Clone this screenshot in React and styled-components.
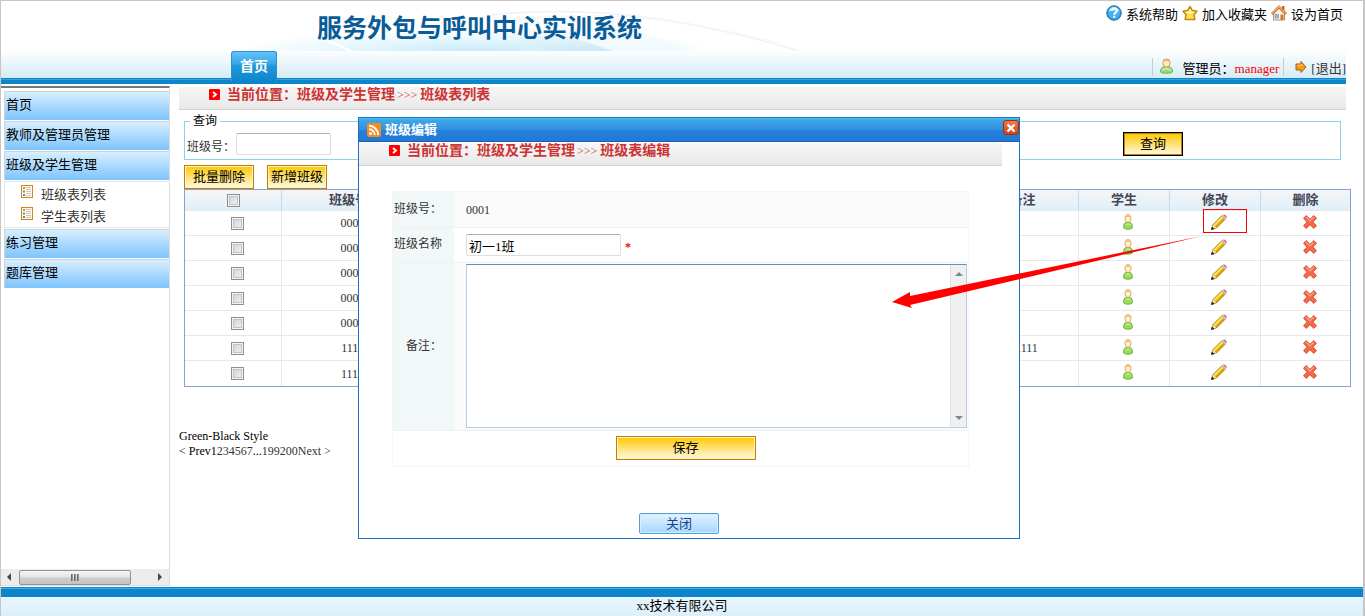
import React from 'react'
import styled, { createGlobalStyle, css } from "styled-components";

const GlobalStyle = createGlobalStyle`
  * {
    box-sizing: border-box;
  }
  body {
    margin: 0;
    background: #fff;
    color: #000;
    font-family: "Liberation Serif", "Noto Sans CJK SC", serif;
    font-size: 13px;
    line-height: 16px;
  }
  a {
    color: inherit;
    text-decoration: none;
  }
  button, input, textarea {
    font-family: inherit;
    font-size: 13px;
  }
`;

const Page = styled.div`
  position: relative;
  display: flex;
  flex-direction: column;
  min-height: 100vh;
  border: solid #c6c6c8;
  border-width: 1px 2px 0 1px;
`;

/* header */

const Header = styled.header`
  padding-right: 17px;
`;

const HeaderTop = styled.div`
  display: flex;
  justify-content: space-between;
  height: 50px;
`;

const Banner = styled.div`
  display: grid;
  align-items: center;
  margin-left: 230px;

  > * {
    grid-area: 1 / 1;
  }
`;

const Title = styled.h1`
  margin: 0;
  padding-left: 86px;
  color: #0a5c98;
  font-family: "Noto Sans CJK SC", sans-serif;
  font-size: 25px;
  font-weight: bold;
  line-height: 50px;
  white-space: nowrap;
`;

const TopLinks = styled.nav`
  display: flex;
  align-items: flex-start;
  gap: 4px;
  padding: 3px 3px 0 0;
`;

const TopLink = styled.a`
  display: flex;
  align-items: flex-start;
  gap: 4px;
  white-space: nowrap;

  span {
    padding-top: 3px;
  }
`;

const NavBar = styled.div`
  display: flex;
  justify-content: space-between;
  height: 33px;
  padding-left: 230px;
  background: linear-gradient(#fdfeff, #d4ecf6 27px, #0c85cc 27px 28px, #3a9fde 28px 29px, #0c85cc 29px);
`;

const Tab = styled.a`
  height: 31px;
  padding: 0 8px;
  border: 1px solid #2e8fd2;
  border-bottom: 0;
  border-radius: 3px 3px 0 0;
  background: linear-gradient(#62c3f8, #3aa6e6 40%, #2398dc 45%, #0c85cc);
  color: #fff;
  font-size: 14px;
  font-weight: bold;
  line-height: 29px;
`;

const UserInfo = styled.div`
  display: flex;
  align-items: flex-start;
  padding-top: 7px;
`;

const UserCell = styled.div`
  display: flex;
  height: 18px;
  border-left: 1px solid #c8ccd0;
  padding-left: ${(props) => props.$pad}px;
  margin-right: ${(props) => props.$space || 0}px;

  span, a {
    padding: 3px 0 0 ${(props) => props.$textPad}px;
  }
  a {
    color: #333;
  }
`;

const Manager = styled.b`
  color: #f00;
  font-weight: normal;
`;

/* sidebar */

const Body = styled.div`
  display: flex;
  flex: 1;
  padding-top: 2px;
`;

const Sidebar = styled.aside`
  display: flex;
  flex-direction: column;
  justify-content: space-between;
  width: 169px;
  margin-bottom: 1px;
  border-top: 2px solid #777;
  border-right: 1px solid #ddd;
`;

const Menu = styled.nav`
  padding: 3px 0 0 3px;
`;

const MenuItem = styled.a`
  display: block;
  height: 29px;
  margin-bottom: 1px;
  padding-left: 1px;
  border: solid #cbd5de;
  border-width: 1px 0 0 1px;
  background: linear-gradient(#d8effe, #7cc4fe);
  line-height: 26px;
`;

const SubMenu = styled.div`
  height: 47px;
  margin-bottom: 1px;
  padding-top: 1px;
  border: 1px solid #e6e6e6;
  border-right: 0;
`;

const SubItem = styled.a`
  display: flex;
  gap: 8px;
  padding: 2px 0 0 16px;
  height: 22px;
  color: #333;

  span {
    padding-top: 2px;
  }
`;

const ScrollRow = styled.div`
  display: flex;
  align-items: center;
  height: 17px;
  padding: 0 5px;
  background: #ececec;
  border-bottom: 1px solid #ddd;
`;

const ScrollThumb = styled.div`
  width: 113px;
  height: 15px;
  margin: 0 27px 0 7px;
  border: 1px solid #949494;
  border-radius: 2px;
  background: linear-gradient(#f5f5f5, #e4e4e6 48%, #cfcfd2 52%, #c4c4c8);
  display: flex;
  justify-content: center;
  align-items: center;
  gap: 1px;

  i {
    width: 2px;
    height: 7px;
    background: linear-gradient(90deg, #555, #aaa);
  }
`;

/* main */

const Main = styled.main`
  flex: 1;
  padding: 1px 12px 0 9px;
`;

const Crumb = styled.div`
  display: flex;
  height: 23px;
  margin-right: ${(props) => props.$right}px;
  padding: 1px 0 0 30px;
  gap: 7px;
  border-bottom: 1px solid #d2d2d2;
  background: linear-gradient(#f6f6f6, #e9e9e9);
  color: #c33;
  font-size: 14px;
  font-weight: bold;
  line-height: 14px;
  white-space: nowrap;

  em {
    margin: 0 3px 0 2px;
    font-size: 12px;
    font-style: normal;
    font-weight: normal;
  }
`;

const SearchBox = styled.fieldset`
  display: flex;
  justify-content: space-between;
  height: 47px;
  margin: 3px 10px 5px 5px;
  padding: 3px 157px 0 2px;
  border: 1px solid #87d3ea;
  min-width: 0;
  font-size: 12px;

  legend {
    margin-left: 3px;
    padding: 0 3px;
  }
`;

const SearchField = styled.label`
  display: flex;
  align-items: flex-start;
  padding-top: 1px;
  color: #333;

  span {
    width: 49px;
    padding-top: 6px;
  }
`;

const TextInput = styled.input`
  width: ${(props) => props.$width}px;
  height: 22px;
  padding: 1px 2px;
  border: 1px solid #dcdce4;
  border-top-color: #abadb3;
  border-radius: 2px;
  background: #fff;
  color: #000;
`;

const YellowButton = styled.button`
  width: ${(props) => props.$width}px;
  height: 24px;
  padding: 0;
  border: 1px solid #c07f00;
  box-shadow: inset 0 0 0 1px #fff3c4;
  background: linear-gradient(#fdc700, #fffbe6);
  color: #000;
  line-height: 20px;

  ${(props) => props.$primary && css`
    border-color: #000;
    box-shadow: inset 0 0 0 1px #c07f00;
  `}
`;

const Actions = styled.div`
  display: flex;
  gap: 13px;
  padding-left: 5px;
`;

const ListTable = styled.table`
  width: calc(100% - 5px);
  margin-left: 5px;
  border: 1px solid #84a2d3;
  border-collapse: separate;
  border-spacing: 0;
  table-layout: fixed;
  font-size: 12px;
  color: #333;

  th, td {
    border-bottom: 1px solid #e8e8ea;
    border-right: 1px solid #e8e8ea;
    text-align: center;
  }
  th {
    height: 21px;
    padding: 0;
    border-right-color: #c8d8e8;
    background: linear-gradient(#f4f6f8, #e0eff8);
    color: #445;
    font-size: 13px;
    line-height: 16px;
  }
  td {
    height: 25px;
    padding: 0 0 0 8px;
    line-height: 14px;
  }
  tr > :last-child {
    border-right: 0;
  }
  tbody tr:last-child td {
    border-bottom: 0;
  }
`;

const Check = styled.input`
  appearance: none;
  display: block;
  width: 13px;
  height: 13px;
  margin: 0 auto;
  border: 1px solid #8e8f8f;
  box-shadow: inset 0 0 0 1px #f4f4f4, inset 0 0 0 2px #c0c4c8;
  background: linear-gradient(135deg, #cbcfd5, #f6f6f6);
`;

const IconLink = styled.a`
  display: block;
  height: 19px;

  svg {
    display: block;
    margin: 0 auto;
  }
`;

const Pager = styled.div`
  margin-top: 42px;
  font-size: 12px;
  line-height: 15px;

  a {
    color: #333;
  }
`;

const Footer = styled.footer`
  height: 29px;
  padding-top: 10px;
  background: linear-gradient(#0c85cc 1px, #45ace8 1px 2px, #0c85cc 2px 10px, #e8f6fe 10px, #dbf0f8);
  text-align: center;
  line-height: 17px;
`;

/* dialog */

const Dialog = styled.section`
  position: absolute;
  left: 357px;
  top: 116px;
  width: 662px;
  border: 1px solid #1f6fc4;
  background: #fff;
`;

const DialogTitle = styled.div`
  display: flex;
  align-items: center;
  gap: 4px;
  height: 24px;
  margin-bottom: 1px;
  padding: 0 0 0 8px;
  border-top: 1px solid #3dc8f5;
  border-bottom: 1px solid #1a5fb4;
  background: linear-gradient(#45a8e6, #2f91e2 48%, #2580dc 52%, #2278d6);

  h2 {
    flex: 1;
    margin: 0;
    color: #fff;
    font-size: 13px;
    line-height: 20px;
  }
`;

const CloseIcon = styled.button`
  width: 16px;
  height: 15px;
  padding: 0;
  margin-bottom: 5px;
  border: 1px solid #a02e10;
  border-radius: 3px;
  background: linear-gradient(#ee7a4c, #d4421a);

  svg {
    display: block;
    margin: 0 auto;
  }
`;

const DialogBody = styled.form`
  padding-right: 17px;
`;

const FormTable = styled.table`
  width: calc(100% - 66px);
  margin: 25px 33px 46px;
  border: 1px solid #f5f5f5;
  border-collapse: separate;
  border-spacing: 0;
  font-size: 12px;
  color: #333;

  th, td {
    padding: 0;
    border-bottom: 1px solid #f0f1f3;
    text-align: left;
  }
  th {
    width: 61px;
    padding: 0 12px 2px 0;
    background: #f2f8f8;
    font-weight: normal;
    text-align: right;
    white-space: nowrap;
  }
  td {
    padding-left: 12px;
  }
  tr:nth-child(odd) td {
    background: #fafafa;
  }
  tbody tr:last-child td {
    height: 35px;
    padding: 0 0 2px 10px;
    border-bottom: 0;
    background: #fff;
    text-align: center;
  }
`;

const FormRow = styled.tr`
  height: ${(props) => props.$height}px;
`;

const Required = styled.b`
  margin-left: 4px;
  color: #f00;
`;

const NoteBox = styled.div`
  display: flex;
  height: 164px;
  margin: 1px 1px 2px 0;
  border: 1px solid #b5cfe7;
  border-top-color: #5794bf;
  background: #fff;

  textarea {
    flex: 1;
    padding: 2px;
    border: 0;
    outline: 0;
    resize: none;
    overflow: hidden;
  }
`;

const NoteScroll = styled.div`
  display: flex;
  flex-direction: column;
  justify-content: space-between;
  align-items: center;
  width: 16px;
  padding: 6px 0;
  border-left: 1px solid #e2e2e2;
  background: #f0f0f0;
`;

const DialogFooter = styled.div`
  display: flex;
  justify-content: center;
  padding: 0 3px 4px 0;
`;

const BlueButton = styled.button`
  width: 80px;
  height: 21px;
  padding: 0;
  border: 1px solid #5c9ad0;
  border-radius: 2px;
  box-shadow: inset 0 0 0 1px #c8f4ff;
  background: linear-gradient(#e4f3ff, #a6d5ff);
  color: #15428b;
  line-height: 18px;
`;

/* callout drawn over the page */

const Marker = styled.div`
  position: absolute;
  left: 1202px;
  top: 208px;
  width: 44px;
  height: 24px;
  border: 1px solid #f00;
  pointer-events: none;
`;

const Arrow = styled.svg`
  position: absolute;
  left: 889px;
  top: 232px;
  pointer-events: none;
`;

const HelpIcon = () => (
  <svg width="16" height="18" viewBox="1 0 16 18">
    <circle cx="9" cy="9" r="7.3" fill="#1f8fd6" stroke="#3a7cb4" />
    <circle cx="9" cy="9" r="6" fill="#42b4ee" />
    <path d="M3.500 7.500a5.600 5.600 0 0 1 11 0c-3-1.500-8-1.500-11 0z" fill="#a8e0fb" />
    <path d="M6.500 7c0-3.400 5.200-3.200 5.200-.3 0 2-2.500 1.800-2.500 4" fill="none" stroke="#fff" strokeWidth="2" />
    <rect x="8.200" y="11.800" width="2" height="2" fill="#fff" />
  </svg>
)

const StarIcon = () => (
  <svg width="16" height="18" viewBox="0 0 16 18">
    <path d="M8 2.500l2.200 3.800 4.800 1-3 3.500.9 4.700H3.100l.9-4.700-3-3.500 4.800-1z" fill="#fce04a" stroke="#c58a1c" strokeWidth="1.500" strokeLinejoin="round" />
    <path d="M8 4.800l1.400 2.900 3 .5-4.400 1.600-4.400-1.600 3-.5z" fill="#fff8c0" />
  </svg>
)

const HomeIcon = () => (
  <svg width="16" height="18" viewBox="0 0 16 18">
    <path d="M11 2h2.500v5H11z" fill="#c4683c" />
    <path d="M2.500 9L8 3.500 13.500 9v7h-11z" fill="#fdf6e4" stroke="#b0906c" />
    <path d="M1 10l7-7.200L15 10" fill="none" stroke="#c4682c" strokeWidth="2.600" strokeLinejoin="round" />
    <path d="M1.200 9.400L8 2.600l6.800 6.800" fill="none" stroke="#f8b070" strokeWidth="1.200" />
    <path d="M4 10.500h3.500V14H4z" fill="#8fbde4" stroke="#6d7f95" strokeWidth=".6" />
    <path d="M9.500 10.500h3V16h-3z" fill="#c47a3a" />
  </svg>
)

const UserIcon = () => (
  <svg width="16" height="17" viewBox="0 0 16 17">
    <path d="M1.500 14c0-4 2-5.500 6-5.500s6 1.500 6 5.500c-1 1.600-11 1.600-12 0z" fill="#9ad878" stroke="#68b048" />
    <path d="M3.500 12.500c1-2.500 7-2.500 8 0" fill="none" stroke="#cdf0b4" strokeWidth="1.500" />
    <ellipse cx="7.500" cy="4.900" rx="3.700" ry="4" fill="#fdeccc" stroke="#dd9c4c" />
    <path d="M4.300 3.600c.8-2.800 5.600-2.800 6.400 0-2-.8-4.400-.8-6.400 0z" fill="#eeb46a" />
  </svg>
)

const ExitIcon = () => (
  <svg width="12" height="17" viewBox="0 -2 12 17">
    <path d="M1 4h5V1.500l5 5.500-5 5.500V10H1z" fill="#f59a1e" stroke="#a85a10" strokeLinejoin="round" />
    <path d="M2 5.300h4.800V4" fill="none" stroke="#fdd07a" />
  </svg>
)

const ListIcon = () => (
  <svg width="12" height="13" viewBox="0 0 12 13">
    <rect x=".5" y=".5" width="11" height="12" fill="#fffaf0" stroke="#cf8426" />
    <path d="M2 2h2v2H2z" fill="#e8833a" />
    <path d="M2 5.500h2v2H2z" fill="#62a83c" />
    <path d="M2 9h2v2H2z" fill="#4a8fe0" />
    <path d="M5 2.500h5M5 4.500h5M5 6.500h5M5 8.500h5M5 10.500h5" stroke="#d8c8b0" />
  </svg>
)

const CrumbIcon = () => (
  <svg width="11" height="13" viewBox="0 -1 11 13">
    <rect width="11" height="11" rx="1" fill="#f00" />
    <path d="M4 3l3 2.500L4 8" fill="none" stroke="#fff" strokeWidth="1.800" />
  </svg>
)

const StudentIcon = () => (
  <svg width="10" height="16" viewBox="0 0 10 16">
    <path d="M.7 14c-.4-4.500 1.300-5.800 4.300-5.800s4.700 1.300 4.300 5.800c-1 1.600-7.600 1.600-8.600 0z" fill="#98dc58" stroke="#64b244" />
    <path d="M2.500 11c1-1.200 4-1.200 5 0" fill="none" stroke="#d0f4a8" />
    <path d="M2 4.200C2 2 3 .7 5 .7s3 1.300 3 3.500S6.800 8.400 5 8.400 2 6.400 2 4.200z" fill="#fdeed0" stroke="#dfa554" />
    <path d="M2.500 3c.8-2 4.200-2 5 0-1.500-.5-3.500-.5-5 0z" fill="#eab058" />
  </svg>
)

const PencilIcon = () => (
  <svg width="16" height="16" viewBox="0 0 16 16">
    <path d="M.8 15.200l1.200-4.600L11 1.600l3.400 3.400-9 9z" fill="#f7c814" stroke="#8a6410" strokeWidth=".8" />
    <path d="M3 11.300L11.700 2.600" stroke="#fff08a" strokeWidth="1.200" />
    <path d="M4.800 13.200l8.700-8.700" stroke="#d8960c" strokeWidth="1.200" />
    <path d="M.8 15.200L2 10.800l3.300 3.300z" fill="#fbdcb4" />
    <path d="M0 16l.8-3.600 2.800 2.700z" fill="#222" />
    <path d="M10.300 2.300l1.500-1.500 3.500 3.500-1.500 1.500z" fill="#b8c0c8" />
    <path d="M12 .8c1.400-1.600 5 1.900 3.400 3.400z" fill="#e85a72" />
  </svg>
)

const DeleteIcon = () => (
  <svg width="14" height="16" viewBox="0 0 14 16">
    <path d="M3.200 1.600L7 5.300l3.800-3.700 2.700 2.700L9.800 8l3.700 3.700-2.700 2.700L7 10.700l-3.800 3.700-2.700-2.700L4.200 8 .5 4.300z" fill="#f4694a" stroke="#d84426" strokeWidth=".9" strokeLinejoin="round" />
    <path d="M3.200 3.200L7 7l3.800-3.800" fill="none" stroke="#fba890" strokeWidth="1.200" />
  </svg>
)

const FeedIcon = () => (
  <svg width="14" height="14" viewBox="0 0 14 14">
    <rect width="14" height="14" rx="2" fill="#f58a1f" />
    <circle cx="3.500" cy="10.500" r="1.600" fill="#fff" />
    <path d="M2 6.200a5.800 5.800 0 0 1 5.800 5.800M2 2.800A9.200 9.200 0 0 1 11.200 12" fill="none" stroke="#fff" strokeWidth="1.900" />
  </svg>
)

const Triangle = ({ d, w, h, color = '#444' }) => (
  <svg width={w} height={h} viewBox={`0 0 ${w} ${h}`}>
    <path d={d} fill={color} />
  </svg>
)

const Swoosh = () => (
  <svg width="570" height="50" viewBox="0 0 570 50">
    <defs>
      <radialGradient id="glow" cx="43%" cy="100%" r="43%">
        <stop offset="0" stopColor="#c6ebfa" />
        <stop offset=".5" stopColor="#e4f6fd" />
        <stop offset="1" stopColor="#fff" />
      </radialGradient>
      <linearGradient id="wave" x1="0" y1="0" x2="1" y2="1">
        <stop offset="0" stopColor="#fff" stopOpacity="0" />
        <stop offset="1" stopColor="#b9daf0" />
      </linearGradient>
    </defs>
    <rect width="570" height="50" fill="url(#glow)" />
    <path d="M200 22c70-8 130 10 182 28H320c-40-14-80-24-120-28z" fill="url(#wave)" opacity=".5" />
    <path d="M250 20c90-14 150 4 212 30h-80c-40-16-82-28-132-30z" fill="#f2fafe" opacity=".8" />
    <path d="M30 24c40 4 60 12 90 26" fill="none" stroke="#fff" strokeWidth="2" />
    <path d="M260 14c90-10 190 0 308 36" fill="none" stroke="#eff5fb" strokeWidth="2" />
    <path d="M280 20c90-12 160-4 270 22" fill="none" stroke="#f4f7fc" />
  </svg>
)

const classes = [
  { id: '0001', name: '初一1班', note: '' },
  { id: '0002', name: '', note: '' },
  { id: '0003', name: '', note: '' },
  { id: '0004', name: '', note: '' },
  { id: '0005', name: '', note: '' },
  { id: '1111', name: '', note: '1111' },
  { id: '1112', name: '', note: '' },
]

const Breadcrumb = ({ page, right }) => (
  <Crumb $right={right}>
    <CrumbIcon />
    <span>当前位置：班级及学生管理<em>&gt;&gt;&gt;</em>{page}</span>
  </Crumb>
)

const TopBar = () => (
  <Header>
    <HeaderTop>
      <Banner>
        <Swoosh />
        <Title>服务外包与呼叫中心实训系统</Title>
      </Banner>
      <TopLinks>
        <TopLink href="#help"><HelpIcon /><span>系统帮助</span></TopLink>
        <TopLink href="#favorite"><StarIcon /><span>加入收藏夹</span></TopLink>
        <TopLink href="#homepage"><HomeIcon /><span>设为首页</span></TopLink>
      </TopLinks>
    </HeaderTop>
    <NavBar>
      <Tab href="#home">首页</Tab>
      <UserInfo>
        <UserCell $pad={6} $textPad={8} $space={4}>
          <UserIcon />
          <span>管理员：<Manager>manager</Manager></span>
        </UserCell>
        <UserCell $pad={11} $textPad={4}>
          <ExitIcon />
          <a href="#logout">[退出]</a>
        </UserCell>
      </UserInfo>
    </NavBar>
  </Header>
)

const SideMenu = () => (
  <Sidebar>
    <Menu>
      <MenuItem href="#home">首页</MenuItem>
      <MenuItem href="#teachers">教师及管理员管理</MenuItem>
      <MenuItem href="#classes">班级及学生管理</MenuItem>
      <SubMenu>
        <SubItem href="#class-list"><ListIcon /><span>班级表列表</span></SubItem>
        <SubItem href="#student-list"><ListIcon /><span>学生表列表</span></SubItem>
      </SubMenu>
      <MenuItem href="#practice">练习管理</MenuItem>
      <MenuItem href="#questions">题库管理</MenuItem>
    </Menu>
    <ScrollRow>
      <Triangle d="M5 0v8L1 4z" w={6} h={8} />
      <ScrollThumb><i /><i /><i /></ScrollThumb>
      <Triangle d="M0 0v8l4-4z" w={6} h={8} />
    </ScrollRow>
  </Sidebar>
)

const ClassList = () => (
  <ListTable>
    <colgroup>
      <col style={{ width: 97 }} />
      <col style={{ width: 134 }} />
      <col />
      <col style={{ width: 112 }} />
      <col style={{ width: 91 }} />
      <col style={{ width: 91 }} />
      <col style={{ width: 89 }} />
    </colgroup>
    <thead>
      <tr>
        <th><Check type="checkbox" aria-label="全选" /></th>
        <th>班级号</th>
        <th>班级名称</th>
        <th>备注</th>
        <th>学生</th>
        <th>修改</th>
        <th>删除</th>
      </tr>
    </thead>
    <tbody>
      {classes.map((item) => (
        <tr key={item.id}>
          <td><Check type="checkbox" aria-label={item.id} /></td>
          <td>{item.id}</td>
          <td>{item.name}</td>
          <td>{item.note}</td>
          <td><IconLink href="#students" aria-label="学生"><StudentIcon /></IconLink></td>
          <td><IconLink href="#edit" aria-label="修改"><PencilIcon /></IconLink></td>
          <td><IconLink href="#delete" aria-label="删除"><DeleteIcon /></IconLink></td>
        </tr>
      ))}
    </tbody>
  </ListTable>
)

const EditDialog = () => (
  <Dialog role="dialog" aria-label="班级编辑">
    <DialogTitle>
      <FeedIcon />
      <h2>班级编辑</h2>
      <CloseIcon type="button" aria-label="关闭">
        <svg width="10" height="10" viewBox="0 0 10 10">
          <path d="M1.500 1.500l7 7M8.500 1.500l-7 7" stroke="#fff" strokeWidth="2.400" />
        </svg>
      </CloseIcon>
    </DialogTitle>
    <DialogBody onSubmit={(e) => e.preventDefault()}>
      <Breadcrumb page="班级表编辑" right={0} />
      <FormTable>
        <tbody>
          <FormRow $height={36}>
            <th>班级号：</th>
            <td>0001</td>
          </FormRow>
          <FormRow $height={35}>
            <th><label htmlFor="className">班级名称</label></th>
            <td>
              <TextInput id="className" $width={155} defaultValue="初一1班" />
              <Required>*</Required>
            </td>
          </FormRow>
          <tr>
            <th><label htmlFor="note">备注：</label></th>
            <td>
              <NoteBox>
                <textarea id="note" />
                <NoteScroll>
                  <Triangle d="M0 5h8L4 1z" w={8} h={6} color="#888" />
                  <Triangle d="M0 1h8L4 5z" w={8} h={6} color="#888" />
                </NoteScroll>
              </NoteBox>
            </td>
          </tr>
          <tr>
            <td colSpan="2"><YellowButton $width={140}>保存</YellowButton></td>
          </tr>
        </tbody>
      </FormTable>
      <DialogFooter>
        <BlueButton type="button">关闭</BlueButton>
      </DialogFooter>
    </DialogBody>
  </Dialog>
)

const App = () => {
  return (
    <Page>
      <GlobalStyle />
      <TopBar />
      <Body>
        <SideMenu />
        <Main>
          <Breadcrumb page="班级表列表" right={5} />
          <SearchBox>
            <legend>查询</legend>
            <SearchField>
              <span>班级号：</span>
              <TextInput $width={95} />
            </SearchField>
            <YellowButton $width={60} $primary>查询</YellowButton>
          </SearchBox>
          <Actions>
            <YellowButton $width={70}>批量删除</YellowButton>
            <YellowButton $width={60}>新增班级</YellowButton>
          </Actions>
          <ClassList />
          <Pager>
            <div>Green-Black Style</div>
            <div>
              &lt; Prev1<a href="#2">2</a><a href="#3">3</a><a href="#4">4</a><a href="#5">5</a><a href="#6">6</a><a href="#7">7</a>...<a href="#199">199</a><a href="#200">200</a><a href="#next">Next &gt;</a>
            </div>
          </Pager>
        </Main>
      </Body>
      <Footer>xx技术有限公司</Footer>
      <EditDialog />
      <Marker />
      <Arrow width="318" height="76" viewBox="0 0 318 76">
        <path d="M2 69L20 59V63L312 3L20 72L22 75z" fill="#f00" />
      </Arrow>
    </Page>
  )
}

export default App
